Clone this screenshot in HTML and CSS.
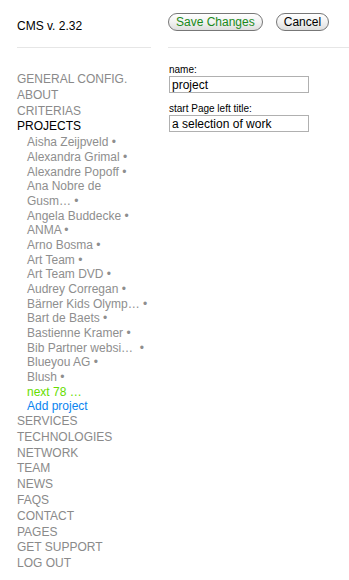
FILE: index.html
```html
<!DOCTYPE html>
<html>

<head>
    <title>CMS</title>
    <meta charset="utf-8">
    <meta name="viewport" content="width=device-width, initial-scale=1.0">

    <link rel="stylesheet" href="styles.css">
</head>

<body>

    <div class="wrap">

        <aside class="side">
            <header class="kop">CMS v. 2.32</header>

            <nav class="nav">
                <a href="#">GENERAL CONFIG.</a>
                <a href="#">ABOUT</a>
                <a href="#">CRITERIAS</a>
                <a href="#" class="aktiv">PROJECTS</a>

                <div class="under">
                    <a href="#">Aisha Zeijpveld •</a>
                    <a href="#">Alexandra Grimal •</a>
                    <a href="#">Alexandre Popoff •</a>
                    <a href="#">Ana Nobre de<br>Gusm… •</a>
                    <a href="#">Angela Buddecke •</a>
                    <a href="#">ANMA •</a>
                    <a href="#">Arno Bosma •</a>
                    <a href="#">Art Team •</a>
                    <a href="#">Art Team DVD •</a>
                    <a href="#">Audrey Corregan •</a>
                    <a href="#">Bärner Kids Olymp… •</a>
                    <a href="#">Bart de Baets •</a>
                    <a href="#">Bastienne Kramer •</a>
                    <a href="#">Bib Partner websi…&nbsp; •</a>
                    <a href="#">Blueyou AG •</a>
                    <a href="#">Blush •</a>
                    <a href="#" class="naeste">next 78 …</a>
                    <a href="#" class="tilfoej">Add project</a>
                </div>

                <a href="#">SERVICES</a>
                <a href="#">TECHNOLOGIES</a>
                <a href="#">NETWORK</a>
                <a href="#">TEAM</a>
                <a href="#">NEWS</a>
                <a href="#">FAQS</a>
                <a href="#">CONTACT</a>
                <a href="#">PAGES</a>
                <a href="#">GET SUPPORT</a>
                <a href="#">LOG OUT</a>
            </nav>
        </aside>

        <main class="indhold">
            <div class="knapper">
                <button class="gem">Save Changes</button>
                <button>Cancel</button>
            </div>

            <form class="felter">
                <label for="navn">name:</label>
                <input id="navn" type="text" value="project">

                <label for="titel">start Page left title:</label>
                <input id="titel" type="text" value="a selection of work">
            </form>
        </main>

    </div>

</body>

</html>
```

FILE: styles.css
```css
body {
    margin: 0;
    background-color: #fff;
    font-family: "Liberation Sans", Arial, sans-serif;
    font-size: 12px;
    color: #000;
}

.wrap {
    display: flex;
    gap: 17px;
    padding-left: 17px;
}

.side {
    width: 134px;
    flex-shrink: 0;
}

.kop {
    height: 48px;
    box-sizing: border-box;
    padding-top: 19px;
    line-height: 14px;
    border-bottom: 1px solid #e6e6e6;
}

.nav {
    padding-top: 24px;
}

.nav a {
    display: block;
    line-height: 15.8px;
    color: #8a8a8a;
    text-decoration: none;
}

.nav a.aktiv {
    color: #000;
}

.under {
    padding-left: 10px;
}

.under a {
    line-height: 14.67px;
    color: #8e8e8e;
}

.nav .under a.naeste {
    color: #66dd00;
}

.nav .under a.tilfoej {
    color: #0a84f0;
}

.indhold {
    flex: 1;
}

.knapper {
    height: 48px;
    box-sizing: border-box;
    padding-top: 13px;
    display: flex;
    align-items: flex-start;
    gap: 13px;
    border-bottom: 1px solid #e6e6e6;
}

button {
    height: 18px;
    padding: 0 7px;
    border: 1px solid #777;
    border-radius: 9px;
    background: linear-gradient(#ffffff, #f2f2f2 50%, #dedede);
    font-family: "Liberation Sans", Arial, sans-serif;
    font-size: 12px;
    line-height: 16px;
    color: #000;
    white-space: nowrap;
}

.gem {
    color: #1a8a1a;
}

.felter {
    padding-top: 16px;
    display: flex;
    flex-direction: column;
    align-items: flex-start;
}

label {
    font-size: 10px;
    line-height: 12px;
    padding-left: 1px;
}

input {
    width: 140px;
    height: 17px;
    box-sizing: border-box;
    margin: 0 0 10px 1px;
    padding: 0 2px;
    border: 1px solid #b0b0b0;
    font-family: "Liberation Sans", Arial, sans-serif;
    font-size: 12px;
}
```
